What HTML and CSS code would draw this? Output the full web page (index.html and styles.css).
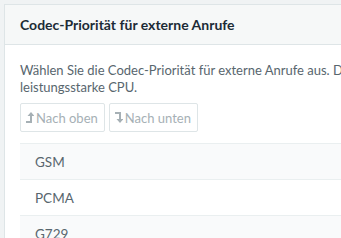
FILE: index.html
```html
<!DOCTYPE html>
<html lang="de">
<head>
    <meta charset="UTF-8">
    <meta name="viewport" content="width=device-width, initial-scale=1.0">
    <title>Codec-Priorität</title>
    <link rel="stylesheet" href="styles.css">
</head>
<body>

    <div class="panel">
        <div class="panel-heading">Codec-Priorität für externe Anrufe</div>
        <div class="panel-body">
            <p>Wählen Sie die Codec-Priorität für externe Anrufe aus. Die Codecs G729 und G722 benötigen eine<br>leistungsstarke CPU.</p>

            <div class="buttons">
                <button disabled>
                    <svg width="8" height="11" viewBox="0 0 8 11"><polygon points="5,0 8.5,4 1.5,4"/><rect x="4" y="4" width="2" height="7"/><rect x="0" y="9" width="6" height="2"/></svg>
                    Nach oben
                </button>
                <button disabled>
                    <svg width="8" height="11" viewBox="0 0 8 11"><rect x="0" y="0" width="6" height="2"/><rect x="4" y="0" width="2" height="7"/><polygon points="1.5,7 8.5,7 5,11"/></svg>
                    Nach unten
                </button>
            </div>

            <table class="codecs">
                <tr><td>GSM</td></tr>
                <tr><td>PCMA</td></tr>
                <tr><td>G729</td></tr>
                <tr><td>G722</td></tr>
            </table>
        </div>
    </div>

</body>
</html>
```

FILE: styles.css
```css
* {
    margin: 0;
    padding: 0;
    box-sizing: border-box;
    font-family: Lato, "Liberation Sans", sans-serif;
}

html, body {
    overflow: hidden;
}

body {
    background-color: #f0f3f4;
    padding: 4px 0 0 4px;
    color: #58666e;
    font-size: 13px;
    width: 760px;
}

.panel {
    background-color: #fff;
    border: 1px solid #dee5e7;
}

.panel-heading {
    background-color: #f6f8f8;
    border-bottom: 1px solid #dee5e7;
    padding: 10px 15px;
    line-height: 19px;
    font-size: 14px;
    font-weight: bold;
    color: #1c2b36;
}

.panel-body {
    padding: 17px 15px 15px;
}

p {
    line-height: 17px;
    margin-bottom: 7px;
    white-space: nowrap;
}

.buttons {
    display: flex;
    gap: 4px;
    margin-bottom: 11px;
}

button {
    height: 29px;
    padding: 0 6px 0 5px;
    background-color: #fff;
    border: 1px solid #dee5e7;
    border-radius: 2px;
    color: #a6b0b5;
    font-size: 13px;
    display: flex;
    align-items: center;
    gap: 2px;
}

button svg {
    fill: #a6b0b5;
}

.codecs {
    width: 100%;
    border-collapse: collapse;
}

.codecs td {
    height: 36px;
    padding: 0 15px;
    border-top: 1px solid #eaeff0;
    font-size: 13.5px;
}

.codecs tr:nth-child(odd) td {
    background-color: #f9fafb;
}
```
